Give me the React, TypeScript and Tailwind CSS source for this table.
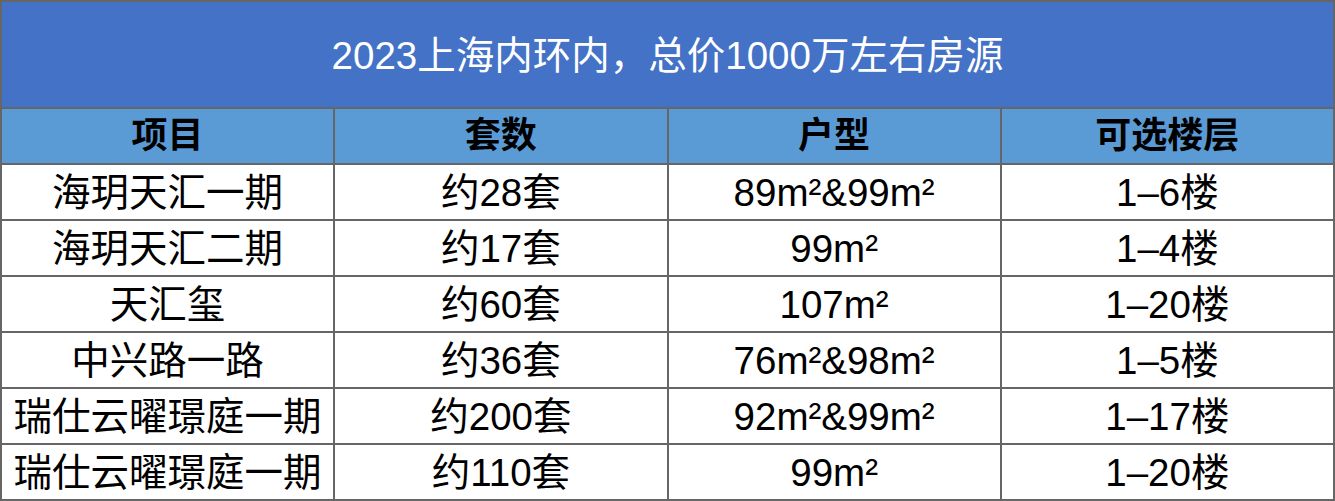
const rows = [
  ["海玥天汇一期", "约28套", "89m²&99m²", "1–6楼"],
  ["海玥天汇二期", "约17套", "99m²", "1–4楼"],
  ["天汇玺", "约60套", "107m²", "1–20楼"],
  ["中兴路一路", "约36套", "76m²&98m²", "1–5楼"],
  ["瑞仕云曜璟庭一期", "约200套", "92m²&99m²", "1–17楼"],
  ["瑞仕云曜璟庭一期", "约110套", "99m²", "1–20楼"],
];

const headers = ["项目", "套数", "户型", "可选楼层"];

export default function App() {
  return (
    <div
      className="w-[1335px] h-[501px] bg-white"
      style={{ fontFamily: '"Liberation Sans", "Noto Sans CJK SC", sans-serif' }}
    >
      <table className="w-full border-collapse table-fixed">
        <tbody>
          <tr>
            <td
              colSpan={4}
              className="h-[107px] bg-[#4472c6] border-2 border-[#666666] text-center text-white text-[38.5px] pt-[2px]"
            >
              2023上海内环内，总价1000万左右房源
            </td>
          </tr>
          <tr>
            {headers.map((h) => (
              <td
                key={h}
                className="h-[56px] bg-[#5b9bd5] border-2 border-[#666666] text-center text-black font-bold text-[36px] leading-none"
              >
                {h}
              </td>
            ))}
          </tr>
          {rows.map((r, i) => (
            <tr key={i}>
              {r.map((c, j) => (
                <td
                  key={j}
                  className="h-[56px] border-2 border-[#666666] text-center text-black text-[38.5px] leading-none pt-[3px]"
                >
                  {c}
                </td>
              ))}
            </tr>
          ))}
        </tbody>
      </table>
    </div>
  );
}
